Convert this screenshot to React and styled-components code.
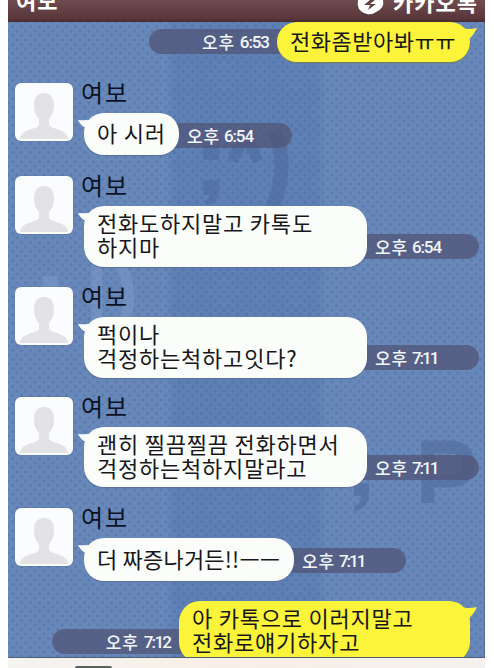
import React from "react";
import styled, { createGlobalStyle } from "styled-components";

const GlobalStyle = createGlobalStyle`
  * { box-sizing: border-box; }
  body { margin: 0; background: #fff; font-family: "Liberation Sans", "Noto Sans CJK KR", sans-serif; }
`;

const Page = styled.div`
  height: 668px;
  overflow: hidden;
  padding: 0 9px 0 8px;
  background: #fff;
`;

const Header = styled.header`
  height: 22px;
  display: flex;
  justify-content: space-between;
  align-items: flex-end;
  padding: 0 8px 0 8px;
  background: linear-gradient(#6f4c4f, #573538 88%, #422b31);
  color: #fff;
  overflow: hidden;
`;

const HeaderText = styled.span`
  font: 700 ${(p) => p.$size}px/24px "Noto Sans CJK KR", sans-serif;
  letter-spacing: ${(p) => p.$spacing}px;
  margin-right: ${(p) => -p.$spacing}px;
  padding-bottom: ${(p) => p.$lift}px;
  white-space: nowrap;
`;

const Brand = styled.div`
  display: flex;
  align-items: flex-end;
  gap: 8px;
`;

const Chat = styled.main`
  position: relative;
  height: 636px;
  overflow: hidden;
  border-right: 1px solid #526b96;
  border-bottom: 1px solid #4f5d72;
  background-color: #6685b7;
  background-image:
    radial-gradient(circle, rgba(62, 92, 150, 0.32) 0.8px, transparent 2.1px),
    radial-gradient(circle, rgba(62, 92, 150, 0.32) 0.8px, transparent 2.1px),
    linear-gradient(90deg, #6888b9 0 33%, #5f80b5 35% 65%, #6888b9 67%);
  background-size: 9px 9px, 9px 9px, 100% 100%;
  background-position: 0 0, 4.5px 4.5px, 0 0;
`;

const Doodles = styled.svg`
  position: absolute;
  inset: 0;
  width: 477px;
  height: 635px;
`;

const Thread = styled.div`
  position: relative;
`;

const Incoming = styled.section`
  display: grid;
  grid-template-columns: 58px 1fr;
  column-gap: 11px;
  height: ${(p) => p.$height}px;
  padding-left: 7px;
`;

const Avatar = styled.div`
  width: 58px;
  height: 58px;
  border-radius: 6px;
  overflow: hidden;
  background: #fbfcfd;
  box-shadow: 0 0 1px #38537d;
`;

const Name = styled.div`
  height: 30px;
  font: 400 24px/17px "Noto Sans CJK KR", sans-serif;
  letter-spacing: 1.8px;
  color: #0b1226;
  margin-left: -3px;
`;

const Line = styled.div`
  display: flex;
  align-items: flex-start;
`;

const Outgoing = styled.section`
  display: flex;
  justify-content: flex-end;
  height: ${(p) => p.$height}px;
  padding-right: 14px;
`;

const Bubble = styled.div`
  position: relative;
  z-index: 1;
  flex: none;
  width: ${(p) => p.$width}px;
  height: ${(p) => p.$height}px;
  padding: ${(p) => p.$top}px 0 0 13px;
  border-radius: ${(p) => (p.$mine ? 21 : 20)}px;
  background: ${(p) => (p.$mine ? "#fcf33b" : "#fbfdfb")};
  box-shadow: 0 1px 1px ${(p) => (p.$mine ? "#787d55" : "#57709b")};
  color: #17171a;
`;

const Tail = styled.svg`
  position: absolute;
  top: 6px;
  ${(p) => (p.$mine ? "right: -7px;" : "left: -6px;")}
  width: 20px;
  height: 13px;
`;

const Words = styled.div`
  position: relative;
  font: 400 22px/24px "Noto Sans CJK KR", sans-serif;
  letter-spacing: ${(p) => p.$spacing}px;
  white-space: nowrap;
`;

const Time = styled.time`
  flex: none;
  display: flex;
  align-items: center;
  gap: ${(p) => (p.$mine ? 5 : 4)}px;
  justify-content: ${(p) => (p.$mine ? "flex-end" : "flex-start")};
  width: ${(p) => p.$width}px;
  height: 25px;
  margin-top: ${(p) => p.$top}px;
  ${(p) => (p.$mine
    ? "margin-right: -10px; padding-right: 17px; border-radius: 13px 0 0 13px;"
    : "margin-left: -10px; padding-left: 18px; border-radius: 0 13px 13px 0;")}
  background: rgba(82, 86, 120, 0.76);
  color: #f3f6fb;
  font: 500 17px/22px "Noto Sans CJK KR", sans-serif;
  letter-spacing: 0.8px;
  white-space: nowrap;
`;

const Clock = styled.span`
  font: 500 17px/24px Roboto, "Liberation Sans", sans-serif;
  letter-spacing: ${(p) => p.$spacing}px;
  margin-right: ${(p) => -p.$spacing}px;
`;

const Footer = styled.footer`
  height: 10px;
  display: flex;
  align-items: flex-end;
  padding-left: 67px;
  background: linear-gradient(90deg, #f5f4f1, #f8efe6 50%, #f4f1ef);
`;

const FooterButton = styled.div`
  width: 37px;
  height: 2px;
  border-radius: 4px 4px 0 0;
  background: #57605f;
`;

function Person() {
  return (
    <Avatar>
      <svg width="58" height="58" viewBox="0 0 58 58">
        <path fill="#e3e2e4" d="M29 10c-7 0-10 5-10 12 0 7 2 11 5 14v6c-2 4-12 4-16 8-2 2-3 4-3 6h48c0-2-1-4-3-6-4-4-13-4-16-8v-6c3-3 5-7 5-14 0-7-3-12-10-12z" />
      </svg>
    </Avatar>
  );
}

const clockSpacing = { "7:11": -2, "7:12": -1.7 };

function Stamp({ time, mine, width, top }) {
  return (
    <Time $mine={mine} $width={width} $top={top}>
      <span>오후</span>
      <Clock $spacing={clockSpacing[time] ?? -1.1}>{time}</Clock>
    </Time>
  );
}

function Message({ lines, mine, width, height, top, spacing = [] }) {
  return (
    <Bubble $mine={mine} $width={width} $height={height} $top={top}>
      <Tail $mine={mine} viewBox="0 0 20 13">
        {mine
          ? <path fill="#fcf33b" d="M5 0Q11 2 20 0Q17 7 11 12H0z" />
          : <path fill="#fbfdfb" d="M17 0Q8 2 0 1Q2 6 8 9H17z" />}
      </Tail>
      {lines.map((line, i) => <Words key={line} $spacing={spacing[i] ?? 0.78}>{line}</Words>)}
    </Bubble>
  );
}

const received = [
  { id: 1, rowHeight: 93, lines: ["아 시러"], width: 95, height: 42, top: 7, time: "6:54", stampWidth: 123, stampTop: 10 },
  { id: 2, rowHeight: 111, lines: ["전화도하지말고 카톡도", "하지마"], width: 283, height: 61, top: 4, time: "6:54", stampWidth: 122, stampTop: 28 },
  { id: 3, rowHeight: 110, lines: ["퍽이나", "걱정하는척하고잇다?"], width: 283, height: 61, top: 4, time: "7:11", stampWidth: 122, stampTop: 28 },
  { id: 4, rowHeight: 111, lines: ["괜히 찔끔찔끔 전화하면서", "걱정하는척하지말라고"], width: 283, height: 60, top: 4, time: "7:11", stampWidth: 122, stampTop: 28 },
  { id: 5, rowHeight: 93, lines: ["더 짜증나거든!!ㅡㅡ"], width: 210, height: 43, top: 8, time: "7:11", stampWidth: 122, stampTop: 10, spacing: [0.2] },
];

function Background() {
  return (
    <Doodles viewBox="0 0 477 635" fill="none">
      <path stroke="#4c6899" strokeOpacity=".55" strokeWidth="14" d="M266 108q16 37-2 78" />
      <path stroke="#4c6899" strokeOpacity=".55" strokeWidth="11" d="m224 139 14-27 12 27" />
      <path fill="#4c6899" fillOpacity=".55" d="M195 158h16v11q0 11-12 14l-4-4q7-2 7-6h-7zM195 123h16v15h-16z" />
      <path stroke="#7c98c6" strokeOpacity=".55" strokeWidth="11" d="M89 235v63M110 235q18 40 6 62" />
      <path fill="#7c98c6" fillOpacity=".55" d="M35 254h15v20H35z" />
      <path stroke="#4c6899" strokeOpacity=".55" strokeWidth="13" d="M420 481v-56h21q19 0 19 17t-19 17h-21" />
      <path fill="#4c6899" fillOpacity=".55" d="M346 461h15v11q0 15-15 17v-5q7-2 7-10h-7z" />
    </Doodles>
  );
}

export default function App() {
  return (
    <>
      <GlobalStyle />
      <Page>
        <Header>
          <HeaderText $size={22} $spacing={1} $lift={11}>여보</HeaderText>
          <Brand>
            <svg width="29" height="22" viewBox="0 0 29 22">
              <path fill="#fff" d="M2 0h25q2 8-7 12-4 3-9 2-5-1-8-5-2-4-1-9z" />
              <path fill="#61403f" d="m14 0-6 5h6l-2 5 8-6h-6l5-4z" />
            </svg>
            <HeaderText $size={22} $spacing={1} $lift={9}>카카오톡</HeaderText>
          </Brand>
        </Header>
        <Chat>
          <Background />
          <Thread>
            <Outgoing $height={61}>
              <Stamp mine time="6:53" width={138} top={7} />
              <Message mine lines={["전화좀받아봐ㅠㅠ"]} width={193} height={40} top={6} spacing={[0.5]} />
            </Outgoing>
            {received.map((m) => (
              <Incoming key={m.id} $height={m.rowHeight}>
                <Person />
                <div>
                  <Name>여보</Name>
                  <Line>
                    <Message {...m} />
                    <Stamp time={m.time} width={m.stampWidth} top={m.stampTop} />
                  </Line>
                </div>
              </Incoming>
            ))}
            <Outgoing $height={56}>
              <Stamp mine time="7:12" width={137} top={28} />
              <Message mine lines={["아 카톡으로 이러지말고", "전화로얘기하자고"]} width={291} height={62} top={4} />
            </Outgoing>
          </Thread>
        </Chat>
        <Footer><FooterButton /></Footer>
      </Page>
    </>
  );
}
